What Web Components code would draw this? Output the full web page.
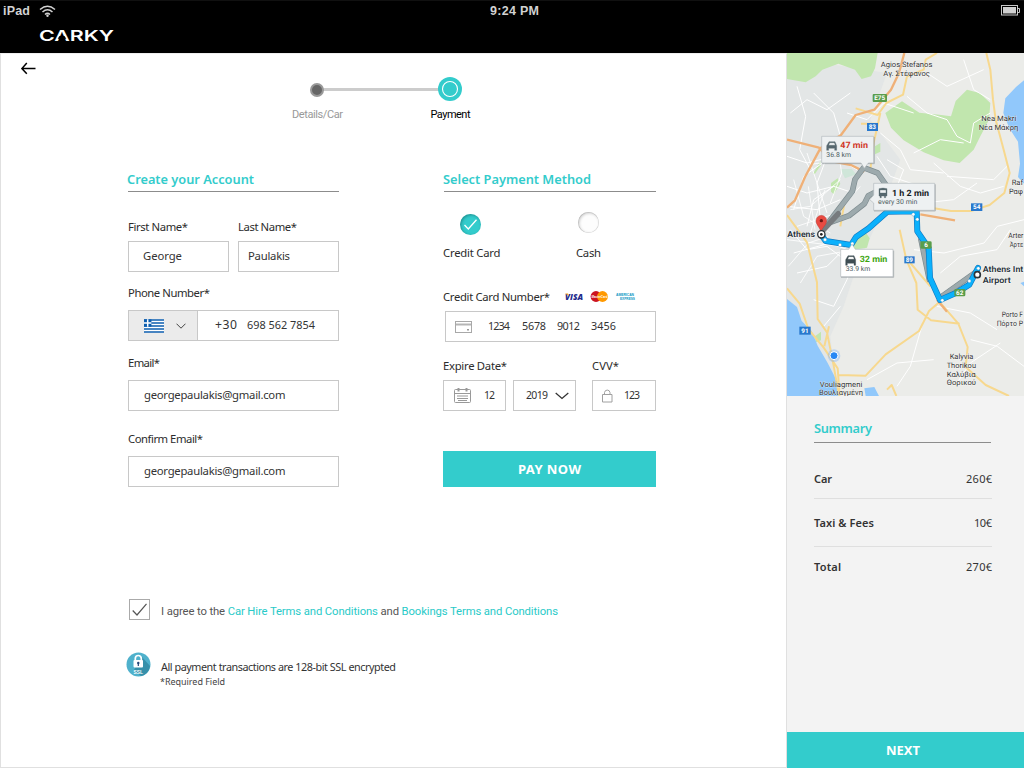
<!DOCTYPE html>
<html lang="en">
<head>
<meta charset="utf-8">
<title>Carky – Payment</title>
<style>
html,body{margin:0;padding:0;width:1024px;height:768px;overflow:hidden;background:#fff}
</style>
</head>
<body>
<carky-app></carky-app>
<script>
function define(name, html, Base = HTMLElement) {
  const tpl = document.createElement('template');
  tpl.innerHTML = html;
  customElements.define(name, class extends Base {
    constructor() {
      super();
      this.attachShadow({ mode: 'open' }).appendChild(tpl.content.cloneNode(true));
    }
  });
}

define('carky-app', `
<style>
:host{display:grid;grid-template:53px 715px / 787px 237px;width:1024px;height:768px;font-family:"Noto Sans","Open Sans",sans-serif;font-size:11.3px;color:#333;background:#fff}
app-header{grid-column:1/3}
</style>
<app-header></app-header><payment-page></payment-page><trip-sidebar></trip-sidebar>`);

define('app-header', `
<style>
:host{display:block;background:#000;color:#d2d2d2;box-sizing:border-box;border-top:1px solid #101010;height:53px}
.status{display:grid;grid-template-columns:490px 50px 1fr;align-items:center;height:20px;font:bold 12.5px/20px "Liberation Sans",sans-serif}
.l{display:flex;align-items:center;padding-left:3px;gap:9px}
.r{display:flex;justify-content:flex-end;padding-right:2px}
.brand{display:block;margin:4px 0 0 38px}
svg{display:block;overflow:visible}
</style>
<div class="status">
 <div class="l"><fit-text w="27">iPad</fit-text>
 <svg width="17" height="13" viewBox="0 0 17 13" fill="none" stroke="#d2d2d2" stroke-width="1.5"><path d="M1 4.500Q8.500-2 16 4.500M3.500 7Q8.500 2.500 13.500 7M6 9.500Q8.500 7.200 11 9.500"/><circle cx="8.500" cy="10.800" r="1.200" fill="#d2d2d2" stroke="none"/></svg></div>
 <fit-text w="49">9:24 PM</fit-text>
 <div class="r"><svg width="21" height="12" viewBox="0 0 21 12"><rect x=".5" y=".5" width="16" height="9.500" fill="none" stroke="#c8c8c8"/><rect x="2" y="2" width="13" height="6.500" fill="#d0d0d0"/><path d="M17 3.500h1.500v4H17" fill="none" stroke="#c8c8c8"/></svg></div>
</div>
<svg class="brand" width="80" height="22" viewBox="0 0 80 22">
 <text x="1" y="16" font-family="Inter,sans-serif" font-size="15" font-weight="600" fill="#fff" textLength="75" lengthAdjust="spacingAndGlyphs">CARKY</text>
 <path d="M21.500 11h5l1.800 2.800h-8.600z" fill="#000"/>
</svg>`);

define('step-track', `
<style>
:host{display:grid;grid-template-columns:133px 133px;grid-template-rows:26px 21px;justify-content:start;margin-left:250px;font:11px/16px Roboto,sans-serif;text-align:center}
svg{grid-column:1/3;display:block}
span{padding-top:5px}
.a{color:#999}.b{color:#000}
</style>
<svg width="266" height="26" viewBox="0 0 266 26"><path d="M72 13.500H190" stroke="#ccc" stroke-width="3"/><circle cx="66" cy="14" r="6" fill="#666" stroke="#999" stroke-width="2"/><circle cx="199" cy="13" r="12" fill="#3cc"/><circle cx="199" cy="13" r="7.500" fill="none" stroke="#fff" stroke-width="1.100"/></svg>
<span class="a"><fit-text w="51">Details/Car</fit-text></span><span class="b"><fit-text w="40">Payment</fit-text></span>`);

define('section-title', `
<style>
:host{display:block;height:22px;line-height:18px;border-bottom:1px solid #8c8c8c;color:#3cc;font-size:12.800px;font-weight:600;box-sizing:border-box}
</style><slot></slot>`);

define('text-field', `
<style>
:host{display:block}
.label{line-height:16px;height:16px;margin-bottom:var(--gap,8px);display:flex;align-items:center;color:#2c2c2c}
.box{box-sizing:border-box;height:31px;border:1px solid #c8c8c8;display:flex;align-items:center;padding-left:var(--pad,15px);margin-left:var(--inset,0);line-height:16px;background:#fff}
.box ::slotted(fit-text){margin-bottom:2px}
</style><div class="label"><slot name="label"></slot></div><div class="box"><slot></slot></div>`);

define('country-code', `
<style>
:host{display:flex;align-items:center;width:69px;height:29px;box-sizing:border-box;background:#ebebeb;border-right:1px solid #c8c8c8;padding-left:15px;gap:12px}
svg{display:block}
</style>
<svg width="20" height="14" viewBox="0 0 27 18"><path fill="#fff" d="M0 0h27v18H0z"/><path fill="#0d5eaf" d="M0 0h27v2H0zM0 4h27v2H0zM0 8h27v2H0zM0 12h27v2H0zM0 16h27v2H0z"/><path fill="#0d5eaf" d="M0 0h10v10H0z"/><path fill="#fff" d="M4 0h2v10H4zM0 4h10v2H0z"/></svg>
<svg width="10" height="6" viewBox="0 0 10 6"><path d="M.5.700L5 5.200 9.500.700" fill="none" stroke="#444"/></svg>`);

define('pay-option', `
<style>
:host{display:flex;flex-direction:column;align-items:flex-start;line-height:16px;color:#2c2c2c}
.dot{width:21px;height:21px;border-radius:50%;box-sizing:border-box;background:#fdfdfd;box-shadow:inset 1px 1px 3px rgba(0,0,0,.24),inset 0 0 0 .5px #ddd;margin:var(--dot);display:flex;align-items:center;justify-content:center}
:host([checked]) .dot{background:#3cc;box-shadow:inset 1px 1px 3px rgba(0,70,70,.45)}
svg{display:none}:host([checked]) svg{display:block}
</style><div class="dot"><svg width="13" height="11" viewBox="0 0 13 11"><path d="M.5 6l3.800 4L12.500.800" fill="none" stroke="#fff" stroke-width="1.300"/></svg></div><slot></slot>`);

define('card-logos', `
<style>:host{display:block;margin-left:14px}svg{display:block;overflow:visible}</style>
<svg width="76" height="14" viewBox="0 0 76 14">
<text x="1" y="10" font-family="Open Sans,sans-serif" font-weight="800" font-style="italic" font-size="8.500" fill="#1f2b8c" textLength="18" lengthAdjust="spacingAndGlyphs">VISA</text><path d="M1 3.500h3l1 2.500z" fill="#f0a020"/>
<circle cx="32" cy="6.500" r="5.400" fill="#cc1420"/><circle cx="38.500" cy="6.500" r="5.400" fill="#f90"/>
<text x="27.500" y="8" font-family="Liberation Sans,sans-serif" font-weight="700" font-style="italic" font-size="3.800" fill="#fff" textLength="16" lengthAdjust="spacingAndGlyphs">MasterCard</text>
<g font-family="Liberation Sans,sans-serif" font-weight="700" font-size="4.300" fill="#0d97c4"><text x="52" y="5.800" textLength="18" lengthAdjust="spacingAndGlyphs">AMERICAN</text><text x="56" y="9.800" textLength="15" lengthAdjust="spacingAndGlyphs">EXPRESS</text></g>
</svg>`);

define('main-button', `
<style>:host{display:flex;height:36px;align-items:center;justify-content:center;background:#3cc;color:#fff;font-weight:700;font-size:13px;line-height:20px}</style><slot></slot>`);

define('payment-page', `
<style>
:host{display:block;box-sizing:border-box;height:715px;border:1px solid #e0e0e0;border-top-color:#eee;padding-left:0;background:#fff}
svg{display:block}
.back{margin:8px 0 0 20px;height:13px}
step-track{height:47px;margin-top:1px}
.cols{display:grid;grid-template-columns:212px 213px;column-gap:104px;margin:47px 0 0 126px;height:317px}
.left,.right{display:flex;flex-direction:column}
.left>text-field,.left .two{margin-left:1px}
.two{display:grid;grid-template-columns:101px 101px;gap:9px;margin-top:27px;--gap:6px}
.ti{margin-left:1px}.ti fit-text{margin-left:-1px}
.opts{display:grid;grid-template-columns:133px 80px;margin-top:20px}
.num{margin-top:28px;--gap:6px;--pad:9px;--inset:2px}
.exp{display:grid;grid-template-columns:63px 63px 64px;column-gap:7px;margin-top:16px;--gap:6px;align-items:end}
.exp text-field:last-child{margin-left:9px;width:64px}
.terms{display:flex;align-items:center;margin:112px 0 0 128px;height:21px;font:11.300px/16px Roboto,sans-serif;color:#555}
.check{width:21px;height:21px;box-sizing:border-box;border:1px solid #aaa;padding:3px 2px;margin-right:11px}
.terms b{font-weight:400;color:#29cac8}
.ssl{display:flex;margin:32px 0 0 125px;gap:10px;color:#333}
.ssl div{display:flex;flex-direction:column;padding-top:7px;font-size:10.800px}
.ssl fit-text{line-height:16px}
.ssl .small{font-size:9px;color:#444;margin-left:-1px;line-height:13px}
</style>
<svg class="back" width="15" height="13" viewBox="0 0 15 13"><path d="M14.500 6.500H1.200M5.800 1L.900 6.500l4.900 5.300" fill="none" stroke="#000" stroke-width="1.500"/></svg>
<step-track></step-track>
<div class="cols">
 <div class="left">
  <section-title class="ti"><fit-text w="127">Create your Account</fit-text></section-title>
  <div class="two">
   <text-field style="--pad:14px"><fit-text slot="label" w="60">First Name*</fit-text><fit-text w="39">George</fit-text></text-field>
   <text-field style="--pad:9px"><fit-text slot="label" w="59">Last Name*</fit-text><fit-text w="42">Paulakis</fit-text></text-field>
  </div>
  <text-field style="--pad:0;--gap:9px;margin-top:13px"><fit-text slot="label" w="82">Phone Number*</fit-text><country-code></country-code><fit-text w="22" style="margin-left:17px;font-size:12.200px">+30</fit-text><fit-text w="68" style="margin-left:10px;font-size:10.900px">698 562 7854</fit-text></text-field>
  <text-field style="--gap:9px;margin-top:14px"><fit-text slot="label" w="32">Email*</fit-text><fit-text w="141.500">georgepaulakis@gmail.com</fit-text></text-field>
  <text-field style="--gap:9px;margin-top:20px"><fit-text slot="label" w="75">Confirm Email*</fit-text><fit-text w="141.500">georgepaulakis@gmail.com</fit-text></text-field>
 </div>
 <div class="right">
  <section-title class="ti"><fit-text w="148">Select Payment Method</fit-text></section-title>
  <div class="opts">
   <pay-option checked style="--dot:2px 0 10px 17px"><fit-text w="57.500">Credit Card</fit-text></pay-option>
   <pay-option style="--dot:0 0 12px 2px"><fit-text w="25">Cash</fit-text></pay-option>
  </div>
  <text-field class="num"><span slot="label" style="display:flex;align-items:center"><fit-text w="107">Credit Card Number*</fit-text><card-logos></card-logos></span>
   <svg width="17" height="12" viewBox="0 0 17 12"><rect x=".5" y=".5" width="16" height="11" fill="none" stroke="#a8a8a8"/><path d="M1 3.500h15" stroke="#b5b5b5" stroke-width="2"/><path d="M12 8h2v1.500h-2z" fill="#999"/></svg>
   <fit-text w="22" style="margin-left:16px;font-size:10.800px">1234</fit-text><fit-text w="24" style="margin-left:12px;font-size:10.800px">5678</fit-text><fit-text w="23" style="margin-left:11px;font-size:10.800px">9012</fit-text><fit-text w="25" style="margin-left:11px;font-size:10.800px">3456</fit-text>
  </text-field>
  <div class="exp">
   <text-field style="--pad:10px"><fit-text slot="label" w="64">Expire Date*</fit-text><svg width="18" height="16" viewBox="0 0 18 16" fill="none" stroke="#999"><rect x=".5" y="1.500" width="16" height="13" rx="1"/><path d="M1 5.500h15M3 8h11M3 10.500h11M4 12.500h9"/><path d="M4.500 0v3.500M12.500 0v3.500" stroke-width="2"/></svg><fit-text w="11" style="margin-left:12px;font-size:10.500px">12</fit-text></text-field>
   <text-field style="--pad:12px"><fit-text w="22" style="font-size:10.500px">2019</fit-text><svg style="margin-left:7px" width="14" height="8" viewBox="0 0 14 8"><path d="M.700 1L7 6.500 13.300 1" fill="none" stroke="#333" stroke-width="1.300"/></svg></text-field>
   <text-field style="--pad:9px"><fit-text slot="label" w="27">CVV*</fit-text><svg width="11" height="14" viewBox="0 0 11 14" fill="none" stroke="#a0a0a0"><path d="M.500 5.500h9.500v7.500H.500zM2.500 5.500V3.500a2.800 3 0 0 1 5.500 0v2"/></svg><fit-text w="16" style="margin-left:11px;font-size:10.500px">123</fit-text></text-field>
  </div>
  <main-button style="margin-top:40px"><fit-text w="63">PAY NOW</fit-text></main-button>
 </div>
</div>
<div class="terms"><span class="check"><svg width="15" height="13" viewBox="0 0 15 13"><path d="M.700 7.500l4.300 4.500L14.500.800" fill="none" stroke="#555" stroke-width="1.200"/></svg></span><fit-text w="397" style="padding-top:4px">I agree to the <b>Car Hire Terms and Conditions</b> and <b>Bookings Terms and Conditions</b></fit-text></div>
<div class="ssl"><svg width="25" height="25" viewBox="0 0 25 25"><circle cx="12.500" cy="12.500" r="12" fill="#4fb1cc"/><path d="M16 5l8 9a12 12 0 0 1-9 10l-7-6z" fill="#3690aa"/><path d="M9.300 9V6.500a3 3 0 0 1 6 0V9" fill="none" stroke="#fff" stroke-width="1.700"/><rect x="7.500" y="8" width="9.500" height="7.500" rx="1" fill="#fff"/><circle cx="12.300" cy="11" r="1.200" fill="#247"/><path d="M11.700 11h1.200v3h-1.200z" fill="#247"/><text x="7.500" y="21.500" font-family="Liberation Sans,sans-serif" font-weight="700" font-size="5.500" fill="#fff" textLength="9.500" lengthAdjust="spacingAndGlyphs">SSL</text></svg>
<div><fit-text w="235">All payment transactions are 128-bit SSL encrypted</fit-text><fit-text class="small" w="65">*Required Field</fit-text></div></div>`);

define('summary-row', `
<style>:host{display:flex;justify-content:space-between;align-items:center;box-sizing:border-box;margin-left:27px;width:178px;height:var(--h,48px);border-bottom:1px solid #dfdfdf;line-height:16px;font-size:11px}:host([last]){border:0}::slotted([slot=name]){font-weight:600}</style><slot name="name"></slot><slot></slot>`);

define('trip-sidebar', `
<style>
:host{display:flex;flex-direction:column;height:715px;background:#f3f3f3}
section-title{margin:22px 33px 0 27px;height:25px;line-height:21px}
main-button{margin-top:auto;padding-right:5px}
</style>
<route-map></route-map>
<section-title><fit-text w="58">Summary</fit-text></section-title>
<summary-row style="margin-top:17px;--h:39px"><fit-text slot="name" w="18">Car</fit-text><fit-text w="26">260€</fit-text></summary-row>
<summary-row><fit-text slot="name" w="60">Taxi &amp; Fees</fit-text><fit-text w="18">10€</fit-text></summary-row>
<summary-row last style="--h:40px"><fit-text slot="name" w="27">Total</fit-text><fit-text w="26">270€</fit-text></summary-row>
<main-button><fit-text w="34">NEXT</fit-text></main-button>`);

define('route-map', `
<style>:host{display:block;width:237px;height:343px}svg{display:block}</style>
<svg width="237" height="343" viewBox="0 0 711 1029" preserveAspectRatio="none" font-family="Roboto,sans-serif" text-rendering="geometricPrecision">
<rect width="711" height="1029" fill="#ebece9"/>
<path d="M0 70L110 30 300 60 250 200 340 320 270 510 210 640 170 760 130 850 150 1029H0z" fill="#e3e6e6"/>
<g fill="#c1e6ae"><path d="M0 0H272l-8 46-12 24-28 8-20-28-50-18-48 18-20 20-30 18-56-10z"/>
<path d="M345 145l52 34 60 6 35 5 14-46 34-34 38 10 32 30-4 50-26 50-20 40-42 40-48-8-60-24-60-36-38-38-17-44 22-16z"/>
<path d="M132 390l20-14 8 16-20 32-8-8zM78 362l22-38 2 12-18 26zM264 280l16-10v26l-16 8zM204 552l32-14 12 18-8 28-42 6zM84 850l18-14v26l-16 6zM82 918l18-14 10 16-18 4z"/></g>
<path d="M160 348h34l14 16-34 12z" fill="#cfe6d9"/>
<path d="M0 738l30 24 14 42 30 30 18 44 30 52 26 50 10 49H0zM232 1006l30-4 14 27h-40zM711 82l-24 20-32 34-6 44 18 46 26 40 6 66-6 40 18 20zM700 690l11-4v14z" fill="#91c8fb"/>
<g fill="none" stroke="#fff" stroke-width="3" stroke-linejoin="round">
<path d="M10 180L60 140 120 170 190 120M30 100L56 190 38 290 70 350M80 120l60 60 20 70M0 310l60 20 80-20 70 40M0 400l60 20 80-20 60 20M20 470l30-100 70-50M60 520l20-80 60-40M0 460l90 10 70-30M100 500l-10-110 34-90M10 530l50 60 60-10 80 60M20 600l110-30 100 40M30 660l90-20 60-60M80 740l60 20 40-80 30-90M110 820l50-60M360 130l60 50 60 20 30 50 40 20 10-60 50-30M380 300l80-40 70 10M280 240l60 50 30 60 100 10M400 400l-90-30-40-60M340 480l70-30 90-10 70-50M440 330l80 70 60 20 70-20M711 500l-80 20-40 50-120 30-90-10M460 660l60-50 110-20 40-60M630 830l-80-50-100-20M640 870l-90 60-40 60M410 800l-40 140-40 60M711 940l-80-60-80-20M180 180l60 20 50-50 90 30M420 60l60 40 110-50M530 20l30 90 50 30M480 370l140 10 40-40M300 320l50 30-20 50M240 980l90-50 110-10"/>
<path d="M20 380l30 110 80 50M64 400l20 130M114 410l-44 130M30 520l120-40 70-80M0 560l160 20M60 300l60 180M160 380l-90 80-60 10M150 270l14 90-34 90M230 250l-50 70-110 14M4 640l60-70 60-20M40 690l50-80 110-20" stroke-width="2.500"/></g>
<g fill="none" stroke="#f7d88e" stroke-width="6" stroke-linejoin="round">
<path d="M598 0l12 50 8 90 8 60 24 90 18 70-16 60-44 36-56 18h-60l-60-10M450 0l-34 20-6 30-50 20-12 55-50 25-26 36-66-20M280 180l-20 90-10 80M222 212h50M0 706l38 46 26 76 46 56 42 62 6 83M0 486l60 82 30 120 2 110 28 40 20 100 16 90M156 966l80 2 60-64 100-70 30-60 32-28M338 530l20 90 30 70 4 80 40 32 86 10M462 752l52 60 28 70-6 60 60 54 70 33M370 630l60 70M126 820l-14 60M300 1010l14-14 14 33M160 520l14-80"/></g>
<g fill="none" stroke="#efb077" stroke-width="7" stroke-linejoin="round"><path d="M352 0l-16 60-24 50-50 60-56 16-44 60-62 40-46 86-30 70-24 22M0 260l96 24 36 40 60 12 40 20M400 484l104 18M450 740l30 36"/></g>
<g fill="none" stroke-linecap="round" stroke-linejoin="round">
<path d="M112 525l84-110 8-36 26-35 42 16 42 60M130 508l56-20 46-36 12-24 40-20M402 560l25 120M462 732l104-74" stroke="#7e8c90" stroke-width="17"/>
<path d="M112 525l84-110 8-36 26-35 42 16 42 60M130 508l56-20 46-36 12-24 40-20M402 560l25 120M462 732l104-74" stroke="#9daaad" stroke-width="13"/>
<path d="M110 530l44-48" stroke="#777b7e" stroke-width="16"/>
<path d="M106 550l10 14 76 12 15-24 38-26 56-50 88-1 2 60 34 50 4 90 30 66 46-20 42-26 26-50" stroke="#137bc2" stroke-width="18"/>
<path d="M106 550l10 14 76 12 15-24 38-26 56-50 88-1 2 60 34 50 4 90 30 66 46-20 42-26 26-50" stroke="#0bb1fc" stroke-width="14"/></g>
<g fill="#fff" stroke="#3583b4"><circle cx="114" cy="560" r="5"/><circle cx="159" cy="576" r="5"/><circle cx="196" cy="572" r="5"/><circle cx="379" cy="484" r="5"/><circle cx="391" cy="499" r="5"/><circle cx="466" cy="742" r="5"/><circle cx="547" cy="684" r="5"/><circle cx="574" cy="646" r="5"/></g>
<path d="M102 540c-2-18-15-22-15-37a16 16 0 0 1 32 0c0 15-15 19-17 37z" fill="#e94b42" stroke="#a33b35"/><circle cx="103" cy="503" r="5" fill="#6c1613"/>
<circle cx="103" cy="544" r="11" fill="#fff" stroke="#2c3438" stroke-width="4"/><circle cx="103" cy="544" r="4" fill="#222"/><circle cx="571" cy="665" r="9" fill="#fff" stroke="#2c3438" stroke-width="5"/>
<circle cx="141" cy="908" r="19" fill="#75acf7" opacity=".35"/><circle cx="141" cy="908" r="12" fill="#2787f5" stroke="#fff" stroke-width="3"/>
<g fill="#599d4b"><rect x="257" y="123" width="43" height="24" rx="3"/><rect x="400" y="565" width="34" height="22" rx="4"/><rect x="502" y="708" width="33" height="22" rx="4"/></g>
<g fill="#2878cd"><rect x="240" y="210" width="33" height="24"/><rect x="552" y="451" width="34" height="23"/><rect x="352" y="610" width="31" height="21"/><rect x="37" y="821" width="34" height="24"/></g>
<g fill="#fff" font-size="19" font-weight="700" text-anchor="middle"><text x="278" y="142">E75</text><text x="256" y="229">83</text><text x="569" y="469">54</text><text x="417" y="583">6</text><text x="518" y="726">62</text><text x="367" y="627">89</text><text x="54" y="840">91</text></g>
<g fill="#fff" stroke="#b2babc" stroke-width="2"><path fill="#eef1f2" d="M104 250h156v80h-16l-12 16-10-16H104zM260 391h183v81H260v-22l-12-10 12-14z"/><path d="M161 589h24l10-16 10 16h113v82H161z"/></g>
<path d="M162 673h158v-80M105 332h118M243 332h19V252M261 474h184v-80" fill="none" stroke="#8c9498" stroke-width="3" opacity=".55"/>
<path d="M126 266h18l5 12v14h-6v-6h-18v6h-6v-14zM128 269l-3 8h20l-3-8z" fill-rule="evenodd" fill="#56676e" stroke="#56676e"/>
<path d="M183 608h18l5 12v17h-5v-6h-20v6h-5v-17zM185 611l-3 8h20l-3-8z" fill-rule="evenodd" fill="#3e4d53" stroke="#3e4d53"/>
<path d="M276 407q12-4 24 0v22h-4v5h-4v-5h-9v5h-4v-5h-3zM279 411v9h18v-9z" fill-rule="evenodd" fill="#56676e" stroke="#56676e"/>
<g font-size="26" font-weight="700"><text x="160" y="286" fill="#d13728" textLength="83" lengthAdjust="spacingAndGlyphs">47 min</text><text x="315" y="428" fill="#151b1e" textLength="111" lengthAdjust="spacingAndGlyphs">1 h 2 min</text><text x="218" y="628" fill="#3da510" textLength="83" lengthAdjust="spacingAndGlyphs">32 min</text></g>
<g font-size="20.500" fill="#4b5b61"><text x="118" y="312" textLength="74" lengthAdjust="spacingAndGlyphs">36.8 km</text><text x="273" y="454" textLength="118" lengthAdjust="spacingAndGlyphs">every 30 min</text><text x="176" y="654" textLength="74" lengthAdjust="spacingAndGlyphs">33.9 km</text></g>
<g font-size="22.500" fill="#333" stroke="#fff" stroke-width="2" stroke-opacity=".7" paint-order="stroke">
<text x="281" y="42" textLength="155" lengthAdjust="spacingAndGlyphs">Agios Stefanos</text><text x="289" y="69" textLength="140" lengthAdjust="spacingAndGlyphs">Αγ. Στέφανος</text>
<text x="583" y="205" textLength="105" lengthAdjust="spacingAndGlyphs">Nea Makri</text><text x="575" y="231" textLength="119" lengthAdjust="spacingAndGlyphs">Νέα Μάκρη</text>
<text x="674" y="396" textLength="34" lengthAdjust="spacingAndGlyphs">Raf</text><text x="666" y="423" textLength="42" lengthAdjust="spacingAndGlyphs">Ραφ</text>
<text x="664" y="555" textLength="45" lengthAdjust="spacingAndGlyphs">Arter</text><text x="668" y="581" textLength="41" lengthAdjust="spacingAndGlyphs">Άρτε</text>
<text x="644" y="792" textLength="64" lengthAdjust="spacingAndGlyphs">Porto F</text><text x="629" y="819" textLength="79" lengthAdjust="spacingAndGlyphs">Πόρτο Ρ</text>
<text x="488" y="917" textLength="71" lengthAdjust="spacingAndGlyphs">Kalyvia</text><text x="479" y="944" textLength="88" lengthAdjust="spacingAndGlyphs">Thorikou</text><text x="479" y="971" textLength="87" lengthAdjust="spacingAndGlyphs">Καλύβια</text><text x="479" y="997" textLength="88" lengthAdjust="spacingAndGlyphs">Θορικού</text>
<text x="98" y="1001" textLength="128" lengthAdjust="spacingAndGlyphs">Vouliagmeni</text><text x="96" y="1025" textLength="132" lengthAdjust="spacingAndGlyphs">Βουλιαγμένη</text></g>
<g font-size="25" font-weight="600" fill="#263139" stroke="#fff" stroke-width="2" paint-order="stroke"><text x="1" y="552" textLength="83" lengthAdjust="spacingAndGlyphs">Athens</text><text x="587" y="657" textLength="122" lengthAdjust="spacingAndGlyphs">Athens Int</text><text x="587" y="689" textLength="84" lengthAdjust="spacingAndGlyphs">Airport</text></g>
</svg>`);

/* Text run that adjusts its tracking to fill the width given in "w". */
customElements.define('fit-text', class extends HTMLElement {
  constructor() {
    super();
    this.attachShadow({ mode: 'open' }).innerHTML =
      '<style>:host{display:inline-block;white-space:nowrap;flex:none}</style><slot></slot>';
  }
  connectedCallback() {
    const w = parseFloat(this.getAttribute('w'));
    const n = this.textContent.length;
    const range = document.createRange();
    range.selectNodeContents(this);
    const natural = range.getBoundingClientRect().width;
    if (!natural || n < 2) return;
    this.style.letterSpacing = ((w - natural) / (n - 1)).toFixed(3) + 'px';
    this.style.width = w + 'px';
    this.style.textAlign = 'left';
  }
});
</script>
</body>
</html>
